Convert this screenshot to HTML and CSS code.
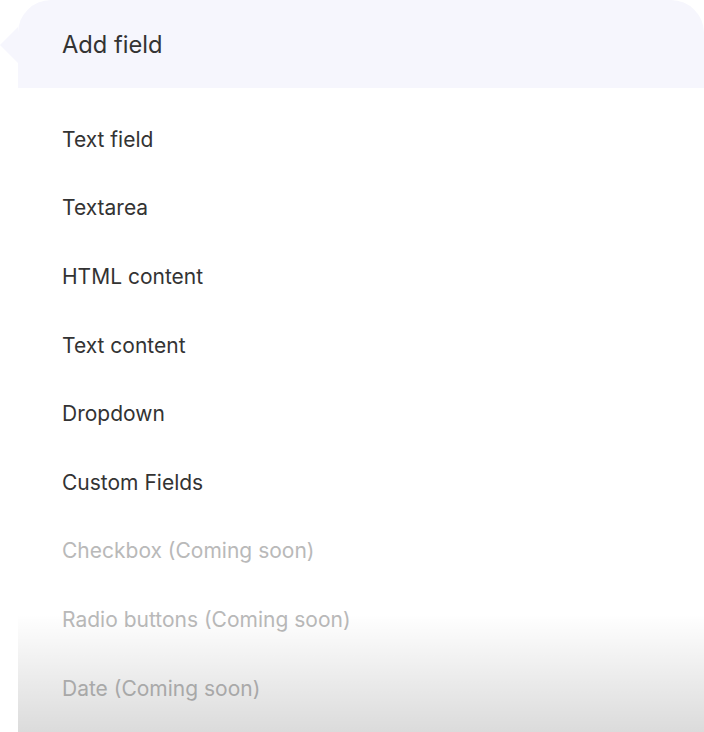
FILE: index.html
```html
<!DOCTYPE html>
<html lang="en">

<head>
    <meta charset="UTF-8">
    <meta name="viewport" content="width=device-width, initial-scale=1.0">
    <title>Add field</title>
    <link rel="stylesheet" href="styles.css">
</head>

<body>
    <!-- Add field popover -->
    <div class="popover">
        <div class="popover-header">Add field</div>

        <ul class="field-list">
            <li class="field-item">Text field</li>
            <li class="field-item">Textarea</li>
            <li class="field-item">HTML content</li>
            <li class="field-item">Text content</li>
            <li class="field-item">Dropdown</li>
            <li class="field-item">Custom Fields</li>
            <li class="field-item disabled">Checkbox (Coming soon)</li>
            <li class="field-item disabled">Radio buttons (Coming soon)</li>
            <li class="field-item disabled">Date (Coming soon)</li>
        </ul>

        <!-- fade at the bottom of the panel -->
        <div class="bottom-fade"></div>
    </div>
</body>

</html>
```

FILE: styles.css
```css
/* Variables */
:root {
    --header-bg: #f6f6fd;
    --text-color: #333;
    --muted-color: #b9b9b9;
    --radius: 33px;
}

/* Base styles */
body {
    margin: 0;
    background-color: #fff;
    font-family: Inter, "Noto Sans", sans-serif;
    color: var(--text-color);
    height: 732px;
    overflow: hidden;
}

/* Popover panel */
.popover {
    position: relative;
    margin-left: 18px;
    height: 732px;
    border-radius: var(--radius) var(--radius) 0 0;
    background-color: #fff;
}

/* small arrow pointing left */
.popover::before {
    content: "";
    position: absolute;
    left: -18px;
    top: 27px;
    border-top: 18px solid transparent;
    border-bottom: 18px solid transparent;
    border-right: 18px solid var(--header-bg);
}

.popover-header {
    height: 88px;
    display: flex;
    align-items: center;
    padding-left: 44px;
    background-color: var(--header-bg);
    border-radius: var(--radius) var(--radius) 0 0;
    font-size: 23.7px;
}

/* Field list */
.field-list {
    list-style: none;
    margin: 0;
    padding: 17px 0 0 0;
}

.field-item {
    height: 68.6px;
    display: flex;
    align-items: center;
    padding-left: 44px;
    font-size: 21px;
}

.field-item.disabled {
    color: var(--muted-color);
}

.bottom-fade {
    position: absolute;
    left: 0;
    right: 0;
    bottom: 0;
    height: 118px;
    background: linear-gradient(to bottom, rgba(0, 0, 0, 0), rgba(0, 0, 0, 0.14));
    pointer-events: none;
}
```
